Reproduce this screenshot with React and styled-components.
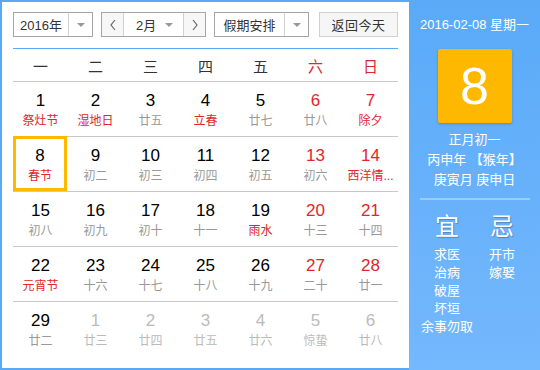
import React from 'react'
import styled, { createGlobalStyle } from 'styled-components'

const Global = createGlobalStyle`
  body {
    margin: 0;
    font-family: "Liberation Sans", "Noto Sans CJK SC", sans-serif;
  }
`

const Wrap = styled.div`
  width: 540px;
  height: 370px;
  box-sizing: border-box;
  border: 2px solid #5aa9f6;
  border-right: none;
  display: flex;
  background: #fff;
`

const Main = styled.div`
  width: 385px;
  padding: 10px 11px 0 11px;
`

const Toolbar = styled.div`
  display: flex;
  height: 25px;
  font-size: 13px;
  color: #333;
`

const Select = styled.div`
  display: flex;
  box-sizing: border-box;
  height: 25px;
  border: 1px solid #a6a6a6;
  margin-left: ${(p) => p.gap || 0}px;
  background: #fff;
`

const SelText = styled.div`
  width: ${(p) => p.w}px;
  display: flex;
  align-items: center;
  justify-content: center;
  border-right: 1px solid #d2d2d2;
`

const Arrow = styled.div`
  width: 23px;
  display: flex;
  align-items: center;
  justify-content: center;
  &::after {
    content: '';
    border-left: 4px solid transparent;
    border-right: 4px solid transparent;
    border-top: 4px solid #999;
    margin-top: 1px;
  }
`

const NavBtn = styled.div`
  width: 21px;
  display: flex;
  align-items: center;
  justify-content: center;
  background: #f7f7f7;
  border-left: ${(p) => (p.right ? '1px solid #d2d2d2' : 'none')};
  border-right: ${(p) => (p.right ? 'none' : '1px solid #d2d2d2')};
`

const MonthText = styled.div`
  width: 59px;
  display: flex;
  align-items: center;
  justify-content: space-between;
  padding: 0 10px 0 12px;
  box-sizing: border-box;
  &::after {
    content: '';
    border-left: 4px solid transparent;
    border-right: 4px solid transparent;
    border-top: 4px solid #999;
    margin-top: 1px;
  }
`

const Button = styled.div`
  width: 81px;
  height: 25px;
  box-sizing: border-box;
  margin-left: 10px;
  border: 1px solid #d0d0d0;
  background: #f6f6f6;
  display: flex;
  align-items: center;
  justify-content: center;
  letter-spacing: 0.5px;
`

const Week = styled.div`
  margin-top: 11px;
  display: grid;
  grid-template-columns: repeat(7, 55px);
  height: 34px;
  box-sizing: border-box;
  border-top: 1px solid #5aa9f6;
  border-bottom: 1px solid #c9c9c9;
  font-size: 15px;
`

const WeekDay = styled.div`
  display: flex;
  align-items: center;
  justify-content: center;
  color: ${(p) => (p.red ? '#e0262b' : '#333')};
`

const Row = styled.div`
  display: grid;
  grid-template-columns: repeat(7, 55px);
  height: 55px;
  box-sizing: border-box;
  border-bottom: ${(p) => (p.last ? 'none' : '1px solid #c9c9c9')};
`

const Day = styled.div`
  display: flex;
  flex-direction: column;
  align-items: center;
  box-sizing: border-box;
  padding-top: 10px;
  ${(p) =>
    p.selected &&
    `
    border: 3px solid #ffb800;
    width: 54px;
    height: 55px;
    margin-top: -1px;
    padding-top: 8px;
  `}
`

const Num = styled.div`
  font-size: 17px;
  line-height: 18px;
  color: ${(p) => p.color};
`

const Lunar = styled.div`
  margin-top: 2px;
  font-size: 12px;
  line-height: 18px;
  white-space: nowrap;
  color: ${(p) => p.color};
`

const Side = styled.div`
  flex: 1;
  background: linear-gradient(#5aaaf8, #74b8fd);
  color: #fff;
  display: flex;
  flex-direction: column;
  align-items: center;
  margin-top: -2px;
  margin-bottom: -2px;
  padding-top: 17px;
`

const DateLine = styled.div`
  font-size: 13px;
  line-height: 16px;
`

const BigDay = styled.div`
  margin-top: 16px;
  width: 74px;
  height: 74px;
  background: #ffb800;
  border-radius: 2px;
  box-shadow: 0 1px 3px rgba(0, 0, 0, 0.2);
  display: flex;
  align-items: center;
  justify-content: center;
  font-size: 52px;
  font-family: "Liberation Sans", sans-serif;
`

const Info = styled.div`
  margin-top: 7px;
  font-size: 13px;
  line-height: 20px;
  text-align: center;
`

const Divider = styled.div`
  margin-top: 8px;
  width: 110px;
  height: 2px;
  background: rgba(255, 255, 255, 0.35);
`

const YiJi = styled.div`
  margin-top: 12px;
  display: grid;
  grid-template-columns: 55px 55px;
  align-items: start;
`

const Col = styled.div`
  display: flex;
  flex-direction: column;
  align-items: center;
`

const Big = styled.div`
  font-size: 24px;
  line-height: 30px;
  text-shadow: 1px 1px 1px rgba(0, 0, 0, 0.25);
  margin-bottom: 4px;
`

const Item = styled.div`
  font-size: 13px;
  line-height: 18px;
  white-space: nowrap;
`

const Chevron = ({ dir }) => (
  <svg width="8" height="12" viewBox="0 0 8 12">
    <polyline
      points={dir === 'left' ? '6,1 2,6 6,11' : '2,1 6,6 2,11'}
      fill="none"
      stroke="#666"
      strokeWidth="1.2"
    />
  </svg>
)

const RED = '#e0262b'
const GRAY = '#999'
const LIGHT = '#bbb'

// [number, lunar, festival?, otherMonth?]
const rows = [
  [[1, '祭灶节', 1], [2, '湿地日', 1], [3, '廿五'], [4, '立春', 1], [5, '廿七'], [6, '廿八'], [7, '除夕', 1]],
  [[8, '春节', 1], [9, '初二'], [10, '初三'], [11, '初四'], [12, '初五'], [13, '初六'], [14, '西洋情...', 1]],
  [[15, '初八'], [16, '初九'], [17, '初十'], [18, '十一'], [19, '雨水', 1], [20, '十三'], [21, '十四']],
  [[22, '元宵节', 1], [23, '十六'], [24, '十七'], [25, '十八'], [26, '十九'], [27, '二十'], [28, '廿一']],
  [[29, '廿二'], [1, '廿三', 0, 1], [2, '廿四', 0, 1], [3, '廿五', 0, 1], [4, '廿六', 0, 1], [5, '惊蛰', 0, 1], [6, '廿八', 0, 1]],
]

const weekNames = ['一', '二', '三', '四', '五', '六', '日']

export default function App() {
  return (
    <>
      <Global />
      <Wrap>
        <Main>
          <Toolbar>
            <Select>
              <SelText w={54}>2016年</SelText>
              <Arrow />
            </Select>
            <Select gap={8}>
              <NavBtn>
                <Chevron dir="left" />
              </NavBtn>
              <MonthText>2月</MonthText>
              <NavBtn right>
                <Chevron dir="right" />
              </NavBtn>
            </Select>
            <Select gap={8}>
              <SelText w={69}>假期安排</SelText>
              <Arrow />
            </Select>
            <Button>返回今天</Button>
          </Toolbar>

          <Week>
            {weekNames.map((w, i) => (
              <WeekDay key={w} red={i >= 5}>
                {w}
              </WeekDay>
            ))}
          </Week>

          {rows.map((row, ri) => (
            <Row key={ri} last={ri === rows.length - 1}>
              {row.map(([n, lunar, fest, other], ci) => {
                const selected = ri === 1 && ci === 0
                const numColor = other ? LIGHT : ci >= 5 ? RED : '#000'
                const lunarColor = other ? LIGHT : fest ? RED : GRAY
                return (
                  <Day key={ci} selected={selected}>
                    <Num color={numColor}>{n}</Num>
                    <Lunar color={lunarColor}>{lunar}</Lunar>
                  </Day>
                )
              })}
            </Row>
          ))}
        </Main>

        <Side>
          <DateLine>2016-02-08 星期一</DateLine>
          <BigDay>8</BigDay>
          <Info>
            <div>正月初一</div>
            <div>丙申年 【猴年】</div>
            <div>庚寅月 庚申日</div>
          </Info>
          <Divider />
          <YiJi>
            <Col>
              <Big>宜</Big>
              <Item>求医</Item>
              <Item>治病</Item>
              <Item>破屋</Item>
              <Item>坏垣</Item>
              <Item>余事勿取</Item>
            </Col>
            <Col>
              <Big>忌</Big>
              <Item>开市</Item>
              <Item>嫁娶</Item>
            </Col>
          </YiJi>
        </Side>
      </Wrap>
    </>
  )
}
